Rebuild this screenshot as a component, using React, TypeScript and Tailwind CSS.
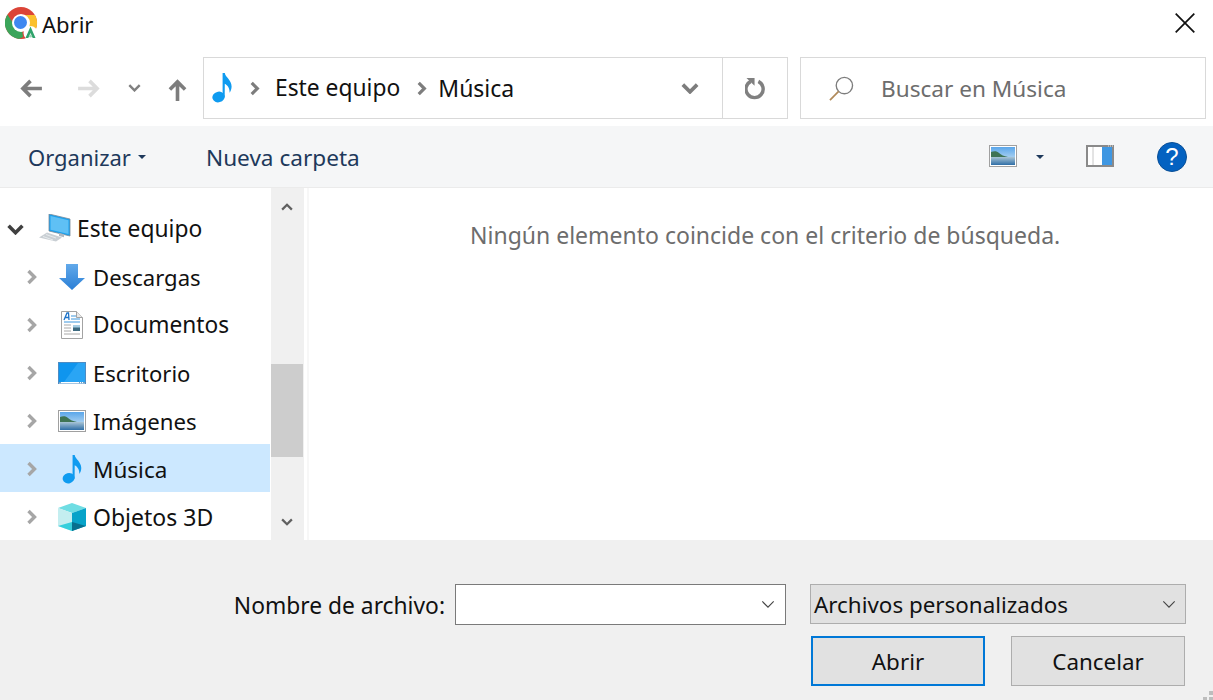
import React from "react";

const Note = ({ className = "" }: { className?: string }) => (
  <svg viewBox="0 0 20 30" className={className}>
    <ellipse cx="6.5" cy="24" rx="6.200" ry="5.300" fill="#0f9bf0" transform="rotate(-15 6.5 24)" />
    <path d="M10.600 0h2.200c.4 4 6.800 7 6.800 13.500 0 2.600-1 4.700-2 6.200.3-5-2.600-8-4.800-9l-.1 13.800h-2.100z" fill="#0f9bf0" />
  </svg>
);

const Chevron = ({ className = "", stroke = "#a6a6a6", width = 3.4 }: { className?: string; stroke?: string; width?: number }) => (
  <svg viewBox="0 0 12 16" className={className}>
    <path d="M2.500 2l6 6-6 6" fill="none" stroke={stroke} strokeWidth={width} />
  </svg>
);

const Down = ({ className = "", stroke = "#808080", width = 3 }: { className?: string; stroke?: string; width?: number }) => (
  <svg viewBox="0 0 16 10" className={className}>
    <path d="M1.500 1.500L8 8l6.500-6.500" fill="none" stroke={stroke} strokeWidth={width} />
  </svg>
);

const Landscape = ({ className = "" }: { className?: string }) => (
  <svg viewBox="0 0 28 22" className={className}>
    <defs>
      <linearGradient id="sky" x1="0" y1="0" x2="0" y2="1">
        <stop offset="0" stopColor="#5aa6ea" />
        <stop offset="1" stopColor="#dcecf5" />
      </linearGradient>
      <linearGradient id="sea" x1="0" y1="0" x2="0" y2="1">
        <stop offset="0" stopColor="#a9c5d6" />
        <stop offset="1" stopColor="#2f6ea6" />
      </linearGradient>
    </defs>
    <rect x="0.500" y="0.500" width="27" height="21" fill="#fff" stroke="#a0a0a0" />
    <rect x="2" y="2" width="24" height="18" fill="url(#sky)" />
    <rect x="2" y="12" width="24" height="8" fill="url(#sea)" />
    <path d="M2 7c3-1 6-1 8 1s5 3 9 4H2z" fill="#3f7455" />
  </svg>
);

const Computer = ({ className = "" }: { className?: string }) => (
  <svg viewBox="0 0 32 28" className={className}>
    <path d="M10 0l21 5v17l-21-5z" fill="#1ba1ee" stroke="#7a8a99" strokeWidth="0.800" />
    <path d="M11.500 2l18 4.200v13.800l-18-4.300z" fill="#5fc0f5" />
    <path d="M20 19l5 1.200v3l-5-1.200z" fill="#b0b8c0" />
    <path d="M8 18.500l15 5-6 4L0 23.500z" fill="#c9cfd4" />
    <path d="M7 20.500l10 3.500M4 22.500l10 3.500" stroke="#eef1f3" strokeWidth="0.800" />
  </svg>
);

const DownloadIcon = ({ className = "" }: { className?: string }) => (
  <svg viewBox="0 0 26 26" className={className}>
    <defs>
      <linearGradient id="dl" x1="0" y1="0" x2="0" y2="1">
        <stop offset="0" stopColor="#62a9ea" />
        <stop offset="1" stopColor="#2a7fd6" />
      </linearGradient>
    </defs>
    <path d="M7 0h12v14h7L13 26 0 14h7z" fill="url(#dl)" />
  </svg>
);

const DocIcon = ({ className = "" }: { className?: string }) => (
  <svg viewBox="0 0 22 28" className={className}>
    <path d="M.500.500h15l6 6v21H.500z" fill="#fff" stroke="#a3a3a3" />
    <path d="M15.500.500v6h6" fill="#e8e8e8" stroke="#a3a3a3" />
    <path d="M3 9l3-7h1.500l.5 7M4.500 6.500H8" fill="none" stroke="#1e73c8" strokeWidth="1.300" />
    <path d="M10 5h5M10 8h9M3 11h16" stroke="#3d96dc" strokeWidth="1" />
    <path d="M3 14h7M3 17h7M3 20h7M3 23h16" stroke="#a8a8a8" strokeWidth="1" />
    <rect x="12" y="14" width="7" height="6" fill="#3d6a80" />
    <rect x="12" y="14" width="7" height="2.500" fill="#a5cde4" />
  </svg>
);

const Desktop = ({ className = "" }: { className?: string }) => (
  <svg viewBox="0 0 28 22" className={className}>
    <rect x="0.500" y="0.500" width="27" height="21" fill="#0f95ee" stroke="#4c8cc4" />
    <path d="M6 20L20 1h7v19z" fill="#2aa5f4" />
    <rect x="1" y="20" width="26" height="1.500" fill="#fff" />
    <path d="M1 20.700h2M21 20.700h1M23 20.700h1M25 20.700h2" stroke="#2d6b9e" strokeWidth="0.800" />
  </svg>
);

const Cube = ({ className = "" }: { className?: string }) => (
  <svg viewBox="0 0 28 28" className={className}>
    <path d="M14 0l14 5-14 5L0 5z" fill="#6fdde3" />
    <path d="M0 5l14 5v18L0 23z" fill="#c4eef0" />
    <path d="M28 5l-14 5v18l14-5z" fill="#07a3c9" />
    <path d="M14 19l14 4-14 5z" fill="#07708f" />
    <path d="M14 19L0 23l14 5z" fill="#35cfdc" />
  </svg>
);

const ChromeIcon = () => (
  <svg viewBox="0 0 33 33" className="w-[33px] h-[33px] shrink-0">
    <circle cx="16" cy="16" r="16" fill="#db4437" />
    <path d="M16 16L2.100 24A16 16 0 0 0 14 32l4-2z" fill="#3ba55a" />
    <path d="M2.100 24A16 16 0 0 1 2.400 7.500L12 22z" fill="#3ba55a" />
    <path d="M16 8h14a16 16 0 0 1-8 22.800z" fill="#fbc02d" />
    <circle cx="16" cy="16" r="9" fill="#fff" />
    <circle cx="15.500" cy="15.500" r="6.500" fill="#3f88f0" />
    <circle cx="25.500" cy="26" r="7" fill="#fff" />
    <path d="M20.500 31L25.500 19.500 30.500 31h-2.800L25.500 26l-2.200 5z" fill="#2fa36b" />
    <circle cx="25.500" cy="29" r="1.600" fill="#9ad3b5" />
  </svg>
);

const Row = ({ icon, label, size, selected }: { icon: React.ReactNode; label: string; size: string; selected?: boolean }) => (
  <div className={`h-12 flex items-center pl-[26px] pt-[2px] ${selected ? "bg-[#cce8ff]" : ""}`}>
    <Chevron className="w-3 h-4 -mt-[1px] shrink-0" />
    <div className="w-[28px] ml-[20px] mr-[7px] flex justify-center shrink-0">{icon}</div>
    <span className={`mt-[1px] ${size}`}>{label}</span>
  </div>
);

export default function App() {
  return (
    <div className="w-[1213px] h-[700px] overflow-hidden bg-white flex flex-col text-[#111] text-[23px] font-['Noto_Sans',sans-serif]">
      <div className="h-[50px] flex items-start pl-[5px] pr-[18px] pt-[7px] shrink-0">
        <ChromeIcon />
        <span className="ml-[4px] mt-[1px] text-[22px] leading-[32px]">Abrir</span>
        <svg viewBox="0 0 20 20" className="w-5 h-5 ml-auto mt-[6px]">
          <path d="M.7.700l18.600 18.600M19.300.700L.7 19.300" stroke="#111" strokeWidth="1.700" />
        </svg>
      </div>

      <div className="h-[76px] flex items-start pt-[7px] shrink-0">
        <div className="w-[203px] h-[62px] flex items-center pl-[19px] shrink-0">
          <svg viewBox="0 0 24 20" className="w-[23px] h-[19px]">
            <path d="M24 10H5M12 2l-8 8 8 8" fill="none" stroke="#7d7d7d" strokeWidth="3.800" />
          </svg>
          <svg viewBox="0 0 24 20" className="w-[23px] h-[19px] ml-[36px]">
            <path d="M0 10h19M12 2l8 8-8 8" fill="none" stroke="#dcdcdc" strokeWidth="3.800" />
          </svg>
          <Down className="w-[13px] h-[8px] ml-[27px]" />
          <svg viewBox="0 0 20 24" className="w-[19px] h-[23px] ml-[27px] mt-[3px]">
            <path d="M10 24V5M2 12l8-8 8 8" fill="none" stroke="#7d7d7d" strokeWidth="3.800" />
          </svg>
        </div>
        <div className="w-[585px] h-[62px] border border-[#d9d9d9] flex items-center shrink-0">
          <Note className="w-[20px] h-[30px] ml-[8px] -mt-[1px] shrink-0" />
          <Chevron className="w-3 h-[15px] ml-[17px] shrink-0" stroke="#7d7d7d" />
          <span className="ml-[14px] text-[22.800px]">Este equipo</span>
          <Chevron className="w-3 h-[15px] ml-[16px] shrink-0" stroke="#7d7d7d" />
          <span className="ml-[10px]">Música</span>
          <div className="ml-auto flex items-center justify-center w-[64px] h-full">
            <Down className="w-[18px] h-[11px]" stroke="#7d7d7d" width={3.400} />
          </div>
          <div className="w-[65px] h-full border-l border-[#d9d9d9] flex items-center justify-center">
            <svg viewBox="0 0 22 24" className="w-[21px] h-[23px] ml-[1px]">
              <path d="M6 4.500a9 9 0 1 0 8 0" fill="none" stroke="#808080" strokeWidth="3.600" />
              <path d="M1.500 1H10v8z" fill="#808080" />
            </svg>
          </div>
        </div>
        <div className="w-[406px] h-[62px] ml-[12px] border border-[#d9d9d9] flex items-center shrink-0">
          <svg viewBox="0 0 26 26" className="w-[25px] h-[25px] ml-[28px] shrink-0">
            <circle cx="16" cy="10" r="8.500" fill="none" stroke="#7d7d7d" strokeWidth="1.400" />
            <path d="M10 16L1 25" stroke="#b08a5a" strokeWidth="1.800" />
          </svg>
          <span className="ml-[27px] mt-[2px] text-[#6d6d6d] text-[22.600px]">Buscar en Música</span>
        </div>
      </div>

      <div className="h-[62px] bg-[#f5f6f7] border-b border-[#ebebeb] flex items-center pl-7 pr-[26px] text-[#1e395b] text-[22px] shrink-0">
        <span className="mt-[2px]">Organizar</span>
        <svg viewBox="0 0 8 4" className="w-2 h-1 ml-[7px]"><path d="M0 0h8L4 4z" fill="#1e395b" /></svg>
        <span className="ml-[60px] mt-[2px] text-[22.600px]">Nueva carpeta</span>
        <Landscape className="w-[28px] h-[22px] ml-auto -mt-[2px]" />
        <svg viewBox="0 0 8 4" className="w-2 h-1 ml-[19px]"><path d="M0 0h8L4 4z" fill="#1e395b" /></svg>
        <svg viewBox="0 0 28 22" className="w-[28px] h-[22px] ml-[42px] -mt-[2px]">
          <rect x="1" y="1" width="26" height="20" fill="#fff" stroke="#8a8a8a" strokeWidth="2" />
          <path d="M7 2v18" stroke="#c8c8c8" strokeWidth="1" />
          <rect x="16" y="2" width="10" height="18" fill="#3f97e2" />
          <path d="M22 1h1M24 1h1M26 1h1" stroke="#e8e8e8" strokeWidth="1" />
        </svg>
        <div className="w-[30px] h-[30px] ml-[43px] rounded-full bg-[#0462c1] border border-[#0a4f96] text-white flex items-center justify-center text-[24px] font-normal font-['Liberation_Sans',sans-serif]">?</div>
      </div>

      <div className="flex-1 flex min-h-0">
        <div className="w-[270px] pt-[16px] shrink-0 overflow-hidden">
          <div className="h-12 flex items-center pl-[7px] pt-[2px]">
            <Down className="w-[17px] h-[11px] shrink-0" stroke="#404040" width={3.400} />
            <Computer className="w-[32px] h-[28px] ml-[16px] -translate-x-[1px] -mt-[2px] shrink-0" />
            <span className="ml-[5px] text-[22.800px]">Este equipo</span>
          </div>
          <Row size="text-[22.100px]" icon={<DownloadIcon className="w-[26px] h-[26px]" />} label="Descargas" />
          <Row size="text-[22.700px]" icon={<DocIcon className="w-[22px] h-[28px]" />} label="Documentos" />
          <Row size="text-[22px]" icon={<Desktop className="w-[28px] h-[22px]" />} label="Escritorio" />
          <Row size="text-[22.200px]" icon={<Landscape className="w-[28px] h-[22px]" />} label="Imágenes" />
          <Row size="text-[22.500px]" icon={<Note className="w-[20px] h-[29px]" />} label="Música" selected />
          <Row size="text-[23px]" icon={<Cube className="w-[28px] h-[28px]" />} label="Objetos 3D" />
        </div>
        <div className="w-[33px] bg-[#f0f0f0] flex flex-col items-center shrink-0 ml-[1px]">
          <div className="h-[38px] shrink-0 flex items-center justify-center -ml-[1px]">
            <Down className="w-[12px] h-[8px] rotate-180" stroke="#606060" />
          </div>
          <div className="h-[138px] shrink-0" />
          <div className="h-[93px] w-full pr-[1px] shrink-0"><div className="w-full h-full bg-[#cdcdcd]" /></div>
          <div className="h-[46px] shrink-0" />
          <div className="h-[37px] shrink-0 flex items-center justify-center -ml-[1px]">
            <Down className="w-[12px] h-[8px]" stroke="#606060" />
          </div>
        </div>
        <div className="w-[2px] bg-[#f7f7f7] ml-[3px] shrink-0" />
        <div className="flex-1 pl-[161px] pt-[31px] text-[#6d6d6d] text-[23px] leading-[32px] whitespace-nowrap">Ningún elemento coincide con el criterio de búsqueda.</div>
      </div>

      <div className="relative h-[160px] bg-[#f0f0f0] shrink-0 pr-[27px] flex flex-col items-end pt-[44px]">
        <div className="flex items-start">
          <span className="mr-[10px] h-[41px] leading-[44px] text-[22.800px]">Nombre de archivo:</span>
          <div className="w-[331px] h-[41px] bg-white border border-[#7a7a7a] flex items-center justify-end pr-[10px]">
            <Down className="w-[14px] h-[9px]" stroke="#444" width={1.300} />
          </div>
          <div className="w-[376px] h-[40px] ml-[24px] bg-[#e1e1e1] border border-[#adadad] flex items-center pl-[3px] pr-[9px]">
            <span className="text-[22.400px] mt-[1px]">Archivos personalizados</span>
            <Down className="w-[14px] h-[9px] ml-auto" stroke="#444" width={1.300} />
          </div>
        </div>
        <div className="flex mt-[11px] pr-[1px]">
          <button className="w-[174px] h-[50px] pt-[2px] text-[22.400px] bg-[#e1e1e1] border-2 border-[#0078d7]">Abrir</button>
          <button className="w-[174px] h-[50px] pt-[2px] text-[22.400px] ml-[26px] bg-[#e1e1e1] border border-[#adadad]">Cancelar</button>
        </div>
        <svg viewBox="0 0 10 9" className="absolute right-0 bottom-0 w-[10px] h-[9px]">
          <path d="M6 0h4v4H6zM0 6h4v3H0zM6 6h4v3H6z" fill="#bdbdbd" />
        </svg>
      </div>
    </div>
  );
}
